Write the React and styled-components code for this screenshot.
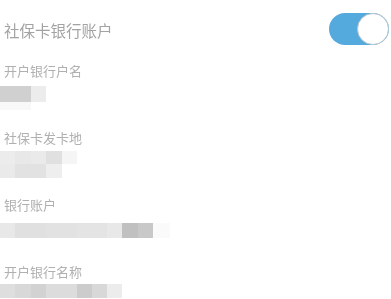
import React from "react";
import styled, { createGlobalStyle } from "styled-components";

const fields = [
  {
    label: "开户银行户名",
    offset: 6,
    rows: [
      { h: 16, cells: [[31, "#d0d0d0"], [15, "#ececec"]] },
      { h: 8, cells: [[31, "#f8f8f8"]] },
    ],
  },
  {
    label: "社保卡发卡地",
    offset: 4,
    rows: [
      { h: 13, cells: [[15, "#ececec"], [16, "#e8e8e8"], [15, "#eaeaea"], [16, "#e0e0e0"], [15, "#f5f5f5"]] },
      { h: 14, cells: [[15, "#eaeaea"], [31, "#e2e2e2"], [16, "#eeeeee"]] },
    ],
  },
  {
    label: "银行账户",
    offset: 9,
    rows: [
      {
        h: 15,
        cells: [[15, "#e8e8e8"], [31, "#e0e0e0"], [31, "#e2e2e2"], [30, "#e4e4e4"], [15, "#e8e8e8"], [16, "#c0c0c0"], [15, "#c8c8c8"], [17, "#fafafa"]],
      },
    ],
  },
  {
    label: "开户银行名称",
    offset: 3,
    rows: [
      {
        h: 14,
        cells: [[15, "#dedede"], [16, "#d8d8d8"], [15, "#d2d2d2"], [31, "#dcdcdc"], [15, "#cccccc"], [15, "#d8d8d8"], [15, "#ececec"]],
      },
    ],
  },
];

const App = () => {
  return (
    <Page>
      <GlobalStyle />
      <Header>
        <Title>社保卡银行账户</Title>
        <Toggle>
          <Knob />
        </Toggle>
      </Header>
      {fields.map((f) => (
        <Field key={f.label}>
          <Label>{f.label}</Label>
          <Mosaic $offset={f.offset}>
            {f.rows.map((r, i) => (
              <MosaicRow key={i} $h={r.h}>
                {r.cells.map(([w, c], j) => (
                  <Cell key={j} style={{ width: w, background: c }} />
                ))}
              </MosaicRow>
            ))}
          </Mosaic>
        </Field>
      ))}
    </Page>
  );
};

export default App;

//* Styled Components *//

const GlobalStyle = createGlobalStyle`
  body {
    margin: 0;
    background: #ffffff;
    font-family: "Noto Sans CJK SC", "Noto Sans", sans-serif;
  }
`;

const Page = styled.div`
  width: 391px;
  height: 299px;
  overflow: hidden;
  background: #fff;
  filter: blur(0.4px);
`;

const Header = styled.div`
  display: flex;
  align-items: center;
  justify-content: space-between;
  height: 58px;
  padding: 0 2px 0 4px;
`;

const Title = styled.div`
  font-size: 15.5px;
  color: #a3a3a3;
  letter-spacing: 0;
  padding-top: 1px;
`;

const Toggle = styled.div`
  display: flex;
  justify-content: flex-end;
  align-items: center;
  width: 60px;
  height: 32px;
  border-radius: 16px;
  background: #55aadd;
`;

const Knob = styled.div`
  width: 30px;
  height: 30px;
  border-radius: 50%;
  background: #fff;
  border: 1px solid #b9c4ca;
`;

const Field = styled.div`
  height: 67px;
  &:first-of-type {
    margin-top: 0;
  }
  &:nth-child(2) {
    margin-top: 4px;
  }
`;

const Label = styled.div`
  padding-left: 4px;
  font-size: 13px;
  line-height: 18px;
  color: #b0b0b0;
`;

const Mosaic = styled.div`
  display: flex;
  flex-direction: column;
  margin-top: ${(p) => p.$offset}px;
  filter: blur(0.6px);
`;

const MosaicRow = styled.div`
  display: flex;
  height: ${(p) => p.$h}px;
`;

const Cell = styled.div`
  height: 100%;
`;
